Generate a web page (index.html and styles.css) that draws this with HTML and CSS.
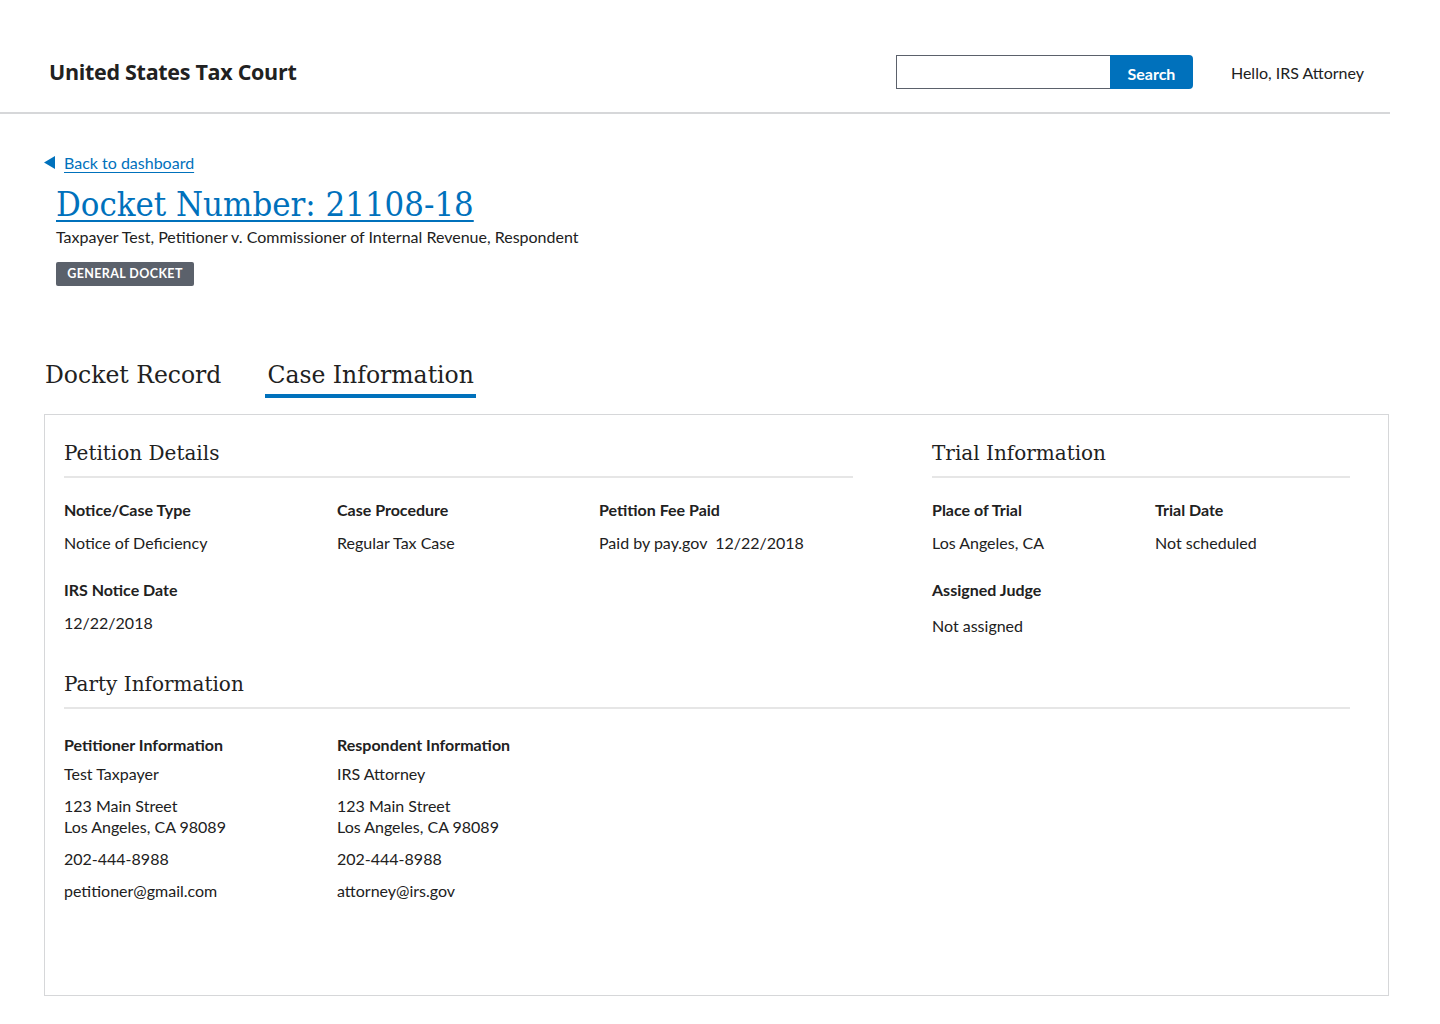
FILE: index.html
```html
<!DOCTYPE html>
<html lang="en">
<head>
<meta charset="utf-8">
<title>United States Tax Court</title>
<link rel="stylesheet" href="styles.css">
</head>
<body>
<header class="site-header">
  <div class="logo">United States Tax Court</div>
  <div class="header-right">
    <form class="search">
      <input class="search-input" type="text" aria-label="Search">
      <button class="search-btn" type="button">Search</button>
    </form>
    <div class="greeting">Hello, IRS Attorney</div>
  </div>
</header>

<main class="main">
  <a class="back-link" href="#">
    <svg class="back-icon" width="12" height="13" viewBox="0 0 12 13"><polygon points="11,0 11,13 0,6.5" fill="#0071bc"/></svg>
    <span>Back to dashboard</span>
  </a>
  <h1 class="docket-title"><a href="#">Docket Number: 21108-18</a></h1>
  <p class="caption">Taxpayer Test, Petitioner v. Commissioner of Internal Revenue, Respondent</p>
  <span class="badge">General Docket</span>

  <nav class="tabs">
    <div class="tab">Docket Record</div>
    <div class="tab active">Case Information</div>
  </nav>

  <section class="panel">
    <div class="top-grid">
      <div class="block">
        <h3 class="section-title">Petition Details</h3>
        <div class="fields petition-fields">
          <div class="field">
            <div class="label">Notice/Case Type</div>
            <div class="value">Notice of Deficiency</div>
          </div>
          <div class="field">
            <div class="label">Case Procedure</div>
            <div class="value">Regular Tax Case</div>
          </div>
          <div class="field">
            <div class="label">Petition Fee Paid</div>
            <div class="value">Paid by pay.gov&nbsp; 12/22/2018</div>
          </div>
          <div class="field">
            <div class="label">IRS Notice Date</div>
            <div class="value">12/22/2018</div>
          </div>
        </div>
      </div>
      <div class="block">
        <h3 class="section-title">Trial Information</h3>
        <div class="fields trial-fields">
          <div class="field">
            <div class="label">Place of Trial</div>
            <div class="value">Los Angeles, CA</div>
          </div>
          <div class="field">
            <div class="label">Trial Date</div>
            <div class="value">Not scheduled</div>
          </div>
          <div class="field">
            <div class="label">Assigned Judge</div>
            <div class="value judge">Not assigned</div>
          </div>
        </div>
      </div>
    </div>

    <div class="block party-block">
      <h3 class="section-title">Party Information</h3>
      <div class="party-grid">
        <div class="party">
          <div class="label">Petitioner Information</div>
          <p class="pline">Test Taxpayer</p>
          <p class="pline">123 Main Street<br>Los Angeles, CA 98089</p>
          <p class="pline">202-444-8988</p>
          <p class="pline">petitioner@gmail.com</p>
        </div>
        <div class="party">
          <div class="label">Respondent Information</div>
          <p class="pline">IRS Attorney</p>
          <p class="pline">123 Main Street<br>Los Angeles, CA 98089</p>
          <p class="pline">202-444-8988</p>
          <p class="pline">attorney@irs.gov</p>
        </div>
      </div>
    </div>
  </section>
</main>
</body>
</html>
```

FILE: styles.css
```css
* { box-sizing: border-box; }

body {
  margin: 0;
  font-family: "Lato", "Noto Sans", sans-serif;
  font-size: 16px;
  color: #212121;
  background: #fff;
}

.site-header {
  width: 1390px;
  height: 114px;
  display: flex;
  align-items: center;
  justify-content: space-between;
  padding: 32px 26px 0 49px;
  border-bottom: 2px solid #d6d7d9;
}

.logo {
  font-family: "Open Sans", "Noto Sans", sans-serif;
  font-weight: 700;
  font-size: 21.5px;
  letter-spacing: -0.3px;
  color: #212121;
  padding-bottom: 2px;
}

.header-right {
  display: flex;
  align-items: center;
  gap: 38px;
}

.search {
  display: flex;
  margin: 0;
}

.search-input {
  width: 214px;
  height: 34px;
  border: 1px solid #5b616b;
  border-right: none;
  margin: 0;
  padding: 0 8px;
  font: inherit;
}

.search-btn {
  width: 83px;
  height: 34px;
  border: none;
  background: #0071bc;
  color: #fff;
  font-family: "Lato", sans-serif;
  font-weight: 700;
  font-size: 16px;
  border-radius: 0 4px 4px 0;
  padding: 2px 0 0;
  margin: 0;
}

.greeting {
  font-size: 16px;
  color: #212121;
}

.main {
  padding: 38px 0 0 44px;
  width: 1390px;
}

.back-link {
  display: inline-flex;
  align-items: center;
  gap: 8px;
  color: #0071bc;
  font-size: 16px;
  text-decoration: none;
  height: 20px;
}

.back-link span {
  text-decoration: underline;
  text-underline-offset: 3px;
}

.back-icon { display: block; margin-top: 1px; }

.docket-title {
  margin: 12px 0 0 12px;
  font-family: "DejaVu Serif Condensed", "DejaVu Serif", serif;
  font-stretch: semi-condensed;
  font-weight: 400;
  font-size: 34.4px;
  line-height: 40px;
}

.docket-title a {
  color: #0071bc;
  text-decoration: underline;
  text-decoration-thickness: 2px;
  text-underline-offset: 4px;
}

.caption {
  margin: 2px 0 0 12px;
  font-size: 16px;
  line-height: 22px;
}

.badge {
  display: inline-block;
  margin: 14px 0 0 12px;
  height: 24px;
  width: 138px;
  padding-top: 4px;
  text-align: center;
  background: #5b616b;
  color: #fff;
  text-transform: uppercase;
  font-weight: 700;
  font-size: 12.5px;
  letter-spacing: 0.4px;
  border-radius: 2px;
}

.tabs {
  display: flex;
  gap: 43px;
  margin-top: 74px;
}

.tab {
  font-family: "DejaVu Serif", serif;
  font-size: 23.5px;
  line-height: 31px;
  padding: 0 2px 3px;
  margin-left: -1px;
  color: #212121;
  border-bottom: 4px solid transparent;
}

.tab.active {
  border-bottom-color: #0071bc;
}

.panel {
  margin-top: 16px;
  width: 1345px;
  height: 582px;
  border: 1px solid #d6d7d9;
  padding: 25px 38px 0 19px;
}

.top-grid {
  display: grid;
  grid-template-columns: 789px 418px;
  column-gap: 79px;
}

.section-title {
  margin: 0;
  font-family: "DejaVu Serif", serif;
  font-weight: 400;
  font-size: 20px;
  line-height: 26px;
  padding-bottom: 10px;
  border-bottom: 2px solid #e6e6e6;
}

.fields {
  display: grid;
  row-gap: 23px;
  margin-top: 20px;
}

.petition-fields { grid-template-columns: 273px 262px 1fr; }
.trial-fields { grid-template-columns: 223px 1fr; }

.label {
  font-weight: 700;
  font-size: 16px;
  line-height: 24px;
}

.value {
  margin-top: 9px;
  line-height: 24px;
}

.value.judge { margin-top: 12px; }

.party-block { margin-top: 33px; }

.party-grid {
  display: grid;
  grid-template-columns: 273px 273px;
  margin-top: 24px;
}

.party .label { margin-bottom: 6px; }

.pline {
  margin: 0 0 11px;
  line-height: 21px;
}
```
